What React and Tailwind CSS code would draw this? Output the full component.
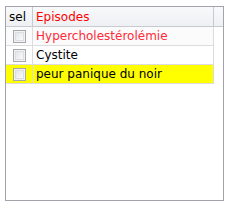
const rows = [
  { label: "Hypercholestérolémie", text: "text-[#ff2a3a]", bg: "bg-[#fbfbfb]" },
  { label: "Cystite", text: "text-black", bg: "bg-white" },
  { label: "peur panique du noir", text: "text-black", bg: "bg-[#ffff00]" },
];

function Check() {
  return (
    <div className="w-[13px] h-[13px] border border-[#a4a7b0] bg-[#f2f2f2] p-[1px]">
      <div className="w-full h-full border border-[#dcdde0] bg-gradient-to-br from-[#e4e5e8] to-[#fafafa]" />
    </div>
  );
}

export default function App() {
  return (
    <div className="w-[228px] h-[206px] bg-white pt-[6px] pl-[5px] font-['DejaVu_Sans',sans-serif] text-[12px]">
      <div className="w-[219px] h-[195px] border border-[#a3a3ab] bg-white flex flex-col">
        {/* header */}
        <div className="flex h-[20px] border-b border-[#c9cad0] bg-gradient-to-b from-[#f8f9fb] to-[#eef0f3]">
          <div className="w-[27px] border-r border-[#c9cad0] pl-[3px] flex items-center text-black">sel</div>
          <div className="w-[181px] border-r border-[#c9cad0] pl-[3px] flex items-center text-[#ff0000]">Episodes</div>
          <div className="flex-1" />
        </div>
        {/* rows */}
        {rows.map((r) => (
          <div key={r.label} className="flex h-[19px]">
            <div className="w-[208px] flex border-b border-r border-[#dcdcdf]">
              <div className={`w-[27px] border-r border-[#dcdcdf] flex items-center justify-center ${r.bg}`}>
                <Check />
              </div>
              <div className={`flex-1 pl-[3px] flex items-center ${r.bg} ${r.text}`}>{r.label}</div>
            </div>
          </div>
        ))}
      </div>
    </div>
  );
}
